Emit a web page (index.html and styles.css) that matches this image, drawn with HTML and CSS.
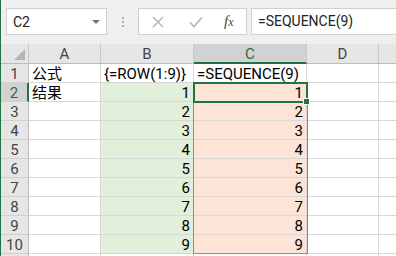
FILE: index.html
```html
<!DOCTYPE html>
<html>
<head>
<meta charset="utf-8">
<link rel="stylesheet" href="styles.css">
</head>
<body>
<div class="app">
  <div class="fbar">
    <div class="namebox"><span class="nb-text">C2</span><span class="nb-arrow"></span></div>
    <div class="dots"><i></i><i></i><i></i></div>
    <div class="btnbox">
      <svg class="ico-x" width="12" height="12" viewBox="0 0 12 12"><path d="M1 1L11 11M11 1L1 11" stroke="#b3b3b3" stroke-width="1.4" fill="none"/></svg>
      <svg class="ico-ok" width="14" height="12" viewBox="0 0 14 12"><path d="M1 6.5L5 10.5L13 1.5" stroke="#b3b3b3" stroke-width="1.6" fill="none"/></svg>
      <span class="fx"><i>f</i><span class="fx-x">x</span></span>
    </div>
    <div class="finput">=SEQUENCE(9)</div>
  </div>
  <div class="sheet">
    <div class="grid">
      <div class="hd corner"><span class="tri"></span></div>
      <div class="hd col">A</div>
      <div class="hd col">B</div>
      <div class="hd col sel">C</div>
      <div class="hd col">D</div>
      <div class="hd col last"></div>

      <div class="rh">1</div><div class="c">公式</div><div class="c">{=ROW(1:9)}</div><div class="c">=SEQUENCE(9)</div><div class="c"></div><div class="c last"></div>
      <div class="rh sel">2</div><div class="c">结果</div><div class="c g n">1</div><div class="c o n">1</div><div class="c"></div><div class="c last"></div>
      <div class="rh">3</div><div class="c"></div><div class="c g n">2</div><div class="c o n">2</div><div class="c"></div><div class="c last"></div>
      <div class="rh">4</div><div class="c"></div><div class="c g n">3</div><div class="c o n">3</div><div class="c"></div><div class="c last"></div>
      <div class="rh">5</div><div class="c"></div><div class="c g n">4</div><div class="c o n">4</div><div class="c"></div><div class="c last"></div>
      <div class="rh">6</div><div class="c"></div><div class="c g n">5</div><div class="c o n">5</div><div class="c"></div><div class="c last"></div>
      <div class="rh">7</div><div class="c"></div><div class="c g n">6</div><div class="c o n">6</div><div class="c"></div><div class="c last"></div>
      <div class="rh">8</div><div class="c"></div><div class="c g n">7</div><div class="c o n">7</div><div class="c"></div><div class="c last"></div>
      <div class="rh">9</div><div class="c"></div><div class="c g n">8</div><div class="c o n">8</div><div class="c"></div><div class="c last"></div>
      <div class="rh">10</div><div class="c"></div><div class="c g n">9</div><div class="c o n">9</div><div class="c"></div><div class="c last"></div>
      <div class="rh"></div><div class="c"></div><div class="c"></div><div class="c"></div><div class="c"></div><div class="c last"></div>
    </div>
    <div class="spill"></div>
    <div class="active"><span class="handle"></span></div>
  </div>
</div>
</body>
</html>
```

FILE: styles.css
```css
html, body {
  margin: 0;
  padding: 0;
  width: 396px;
  height: 256px;
  overflow: hidden;
  background: #ffffff;
}
.app {
  width: 396px;
  height: 256px;
  overflow: hidden;
  border-left: 1px solid #217346;
  box-sizing: border-box;
  font-family: Roboto, "Noto Sans CJK SC", sans-serif;
  color: #000;
}
.fbar {
  height: 44px;
  background: #efefef;
  display: flex;
  align-items: flex-start;
  padding-top: 8px;
  box-sizing: border-box;
}
.namebox {
  margin-left: 5px;
  width: 101px;
  height: 27px;
  box-sizing: border-box;
  background: #fff;
  border: 1px solid #d0d0d0;
  display: flex;
  align-items: center;
  justify-content: space-between;
  padding: 0 6px 0 6px;
  font-size: 14px;
  color: #222;
}
.nb-arrow {
  width: 0;
  height: 0;
  border-left: 4px solid transparent;
  border-right: 4px solid transparent;
  border-top: 4px solid #777;
}
.dots {
  width: 31px;
  height: 27px;
  display: flex;
  flex-direction: column;
  align-items: center;
  justify-content: center;
  gap: 2px;
}
.dots i {
  display: block;
  width: 2px;
  height: 2px;
  background: #b0b0b0;
}
.btnbox {
  width: 109px;
  height: 27px;
  box-sizing: border-box;
  background: #fff;
  border: 1px solid #d0d0d0;
  display: flex;
  align-items: center;
  position: relative;
}
.ico-x { margin-left: 13px; }
.ico-ok { margin-left: 25px; }
.fx {
  margin-left: 21px;
  font-family: "Liberation Serif", serif;
  font-size: 15px;
  color: #444;
}
.fx i { font-style: italic; }
.fx-x { font-style: italic; font-size: 12px; }
.finput {
  margin-left: 4px;
  flex: 1;
  height: 27px;
  box-sizing: border-box;
  background: #fff;
  border: 1px solid #d0d0d0;
  border-right: none;
  font-size: 14px;
  line-height: 25px;
  padding-left: 6px;
  color: #222;
}
.sheet {
  position: relative;
}
.grid {
  display: grid;
  grid-template-columns: 28px 72px 93px 113px 72px 40px;
  grid-template-rows: 20px repeat(11, 19px);
  font-size: 15px;
}
.hd {
  background: #e6e6e6;
  border-right: 1px solid #c8c8c8;
  border-bottom: 1px solid #bcbcbc;
  box-sizing: border-box;
  color: #444;
  text-align: center;
  line-height: 20px;
}
.hd.sel {
  background: #d2d2d2;
  color: #217346;
  border-bottom: 2px solid #217346;
}
.corner {
  position: relative;
}
.tri {
  position: absolute;
  right: 3px;
  bottom: 3px;
  width: 0;
  height: 0;
  border-left: 11px solid transparent;
  border-bottom: 11px solid #b5b5b5;
}
.rh {
  background: #e6e6e6;
  border-right: 1px solid #bcbcbc;
  border-bottom: 1px solid #d0d0d0;
  box-sizing: border-box;
  color: #444;
  text-align: center;
  line-height: 20px;
}
.rh.sel {
  background: #d2d2d2;
  color: #217346;
  border-right: 2px solid #217346;
}
.c {
  border-right: 1px solid #d8d8d8;
  border-bottom: 1px solid #d8d8d8;
  box-sizing: border-box;
  line-height: 20px;
  padding: 0 3px;
  white-space: nowrap;
  overflow: visible;
}
.c.n { text-align: right; }
.c.g { background: #e2efda; }
.c.o { background: #fce4d6; }
.spill {
  position: absolute;
  left: 192px;
  top: 38px;
  width: 115px;
  height: 172px;
  box-sizing: border-box;
  border: 1px solid #6f8ccc;
}
.active {
  position: absolute;
  left: 192px;
  top: 38px;
  width: 115px;
  height: 21px;
  box-sizing: border-box;
  border: 2px solid #217346;
}
.handle {
  position: absolute;
  right: -4px;
  bottom: -4px;
  width: 5px;
  height: 5px;
  background: #217346;
  border: 1px solid #fff;
}
```
